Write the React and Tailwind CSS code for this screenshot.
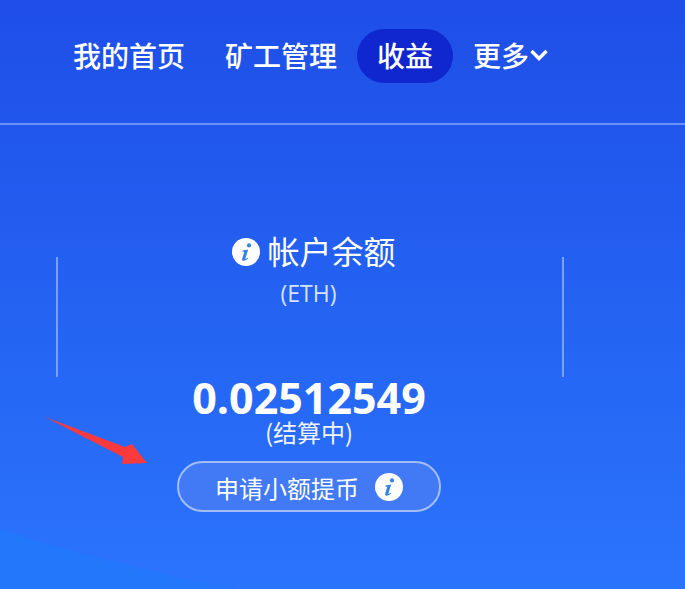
import React from "react";

const cjk = { fontFamily: '"Noto Sans CJK SC", "Noto Sans", sans-serif' };

function InfoIcon({ size = 28, color = "#3484e6" }) {
  return (
    <svg width={size} height={size} viewBox="0 0 28 28" className="shrink-0">
      <circle cx="14" cy="14" r="14" fill="#fff" />
      <circle cx="17" cy="7.4" r="2.1" fill={color} />
      <path d="M10.6 12.6 L16.2 11.6 L13.4 20.4 Q13.2 21.2 14 20.8 L16 19.8 L16.3 20.6 Q13.6 22.8 11.4 22.8 Q9.6 22.8 10.2 20.8 L12.2 14 L10.4 13.6 Z" fill={color} />
    </svg>
  );
}

function NavItem({ children, active }) {
  return (
    <a className={`h-[54px] px-[20px] pb-[3px] flex items-center rounded-[27px] text-[28px] font-medium text-white whitespace-nowrap ${active ? "bg-[#1027cf]" : ""}`}>
      {children}
    </a>
  );
}

export default function App() {
  return (
    <div className="relative w-[685px] h-[589px] overflow-hidden bg-gradient-to-b from-[#1f4ee8] to-[#2b74fc]" style={cjk}>
      <svg className="absolute left-0 bottom-0" width="300" height="60" viewBox="0 0 300 60">
        <path d="M0 0 Q110 36 235 60 L0 60 Z" fill="#2277fb" />
      </svg>

      <header className="relative h-[125px] border-b-2 border-[#6a90f3] pl-[53px] pt-[29px]">
        <nav className="flex items-start">
          <NavItem>我的首页</NavItem>
          <NavItem>矿工管理</NavItem>
          <NavItem active>收益</NavItem>
          <NavItem>
            更多
            <svg width="20" height="16" viewBox="0 0 20 16" className="-mr-[2px]">
              <path d="M2.5 4 L10 11.5 L17.5 4" fill="none" stroke="#fff" strokeWidth="3.4" />
            </svg>
          </NavItem>
        </nav>
      </header>

      <main className="relative px-[56px] pt-[132px] flex flex-col">
        <section className="h-[120px] w-[508px] border-x-2 border-[#7d9ff5] flex flex-col items-center">
          <div className="flex items-center gap-[7px] ml-[8px] -mt-[31px] h-[48px]">
            <span className="translate-y-[2px]">
              <InfoIcon />
            </span>
            <span className="text-[32px] leading-[48px] text-white">帐户余额</span>
          </div>
          <div className="text-[23px] leading-[32px] text-[#d5e1fd] mt-[3px] -ml-[3px]" style={{ fontFamily: '"Open Sans", sans-serif' }}>(ETH)</div>
        </section>

        <div className="w-[506px] flex flex-col items-center">
          <div className="text-[43px] leading-[46px] -mt-[2px] font-bold text-white" style={{ fontFamily: '"Open Sans", sans-serif' }}>0.02512549</div>
          <div className="text-[24px] leading-[30px] -mt-[4px] text-[#eef3ff]">(结算中)</div>
          <button className="mt-[14px] w-[264px] h-[51px] rounded-[26px] border-2 border-[#a3bdf9] bg-[#4279f5] flex items-center justify-center gap-[16px] text-white text-[24px]">
            <span className="pt-[3px]">申请小额提币</span>
            <InfoIcon />
          </button>
        </div>
      </main>

      <svg className="absolute left-[40px] top-[412px]" width="110" height="56" viewBox="0 0 110 56">
        <path d="M5 5 L85 35 L92 32 L107 51 L82 52 L83 45 Z" fill="#fb3a3e" />
      </svg>
    </div>
  );
}
